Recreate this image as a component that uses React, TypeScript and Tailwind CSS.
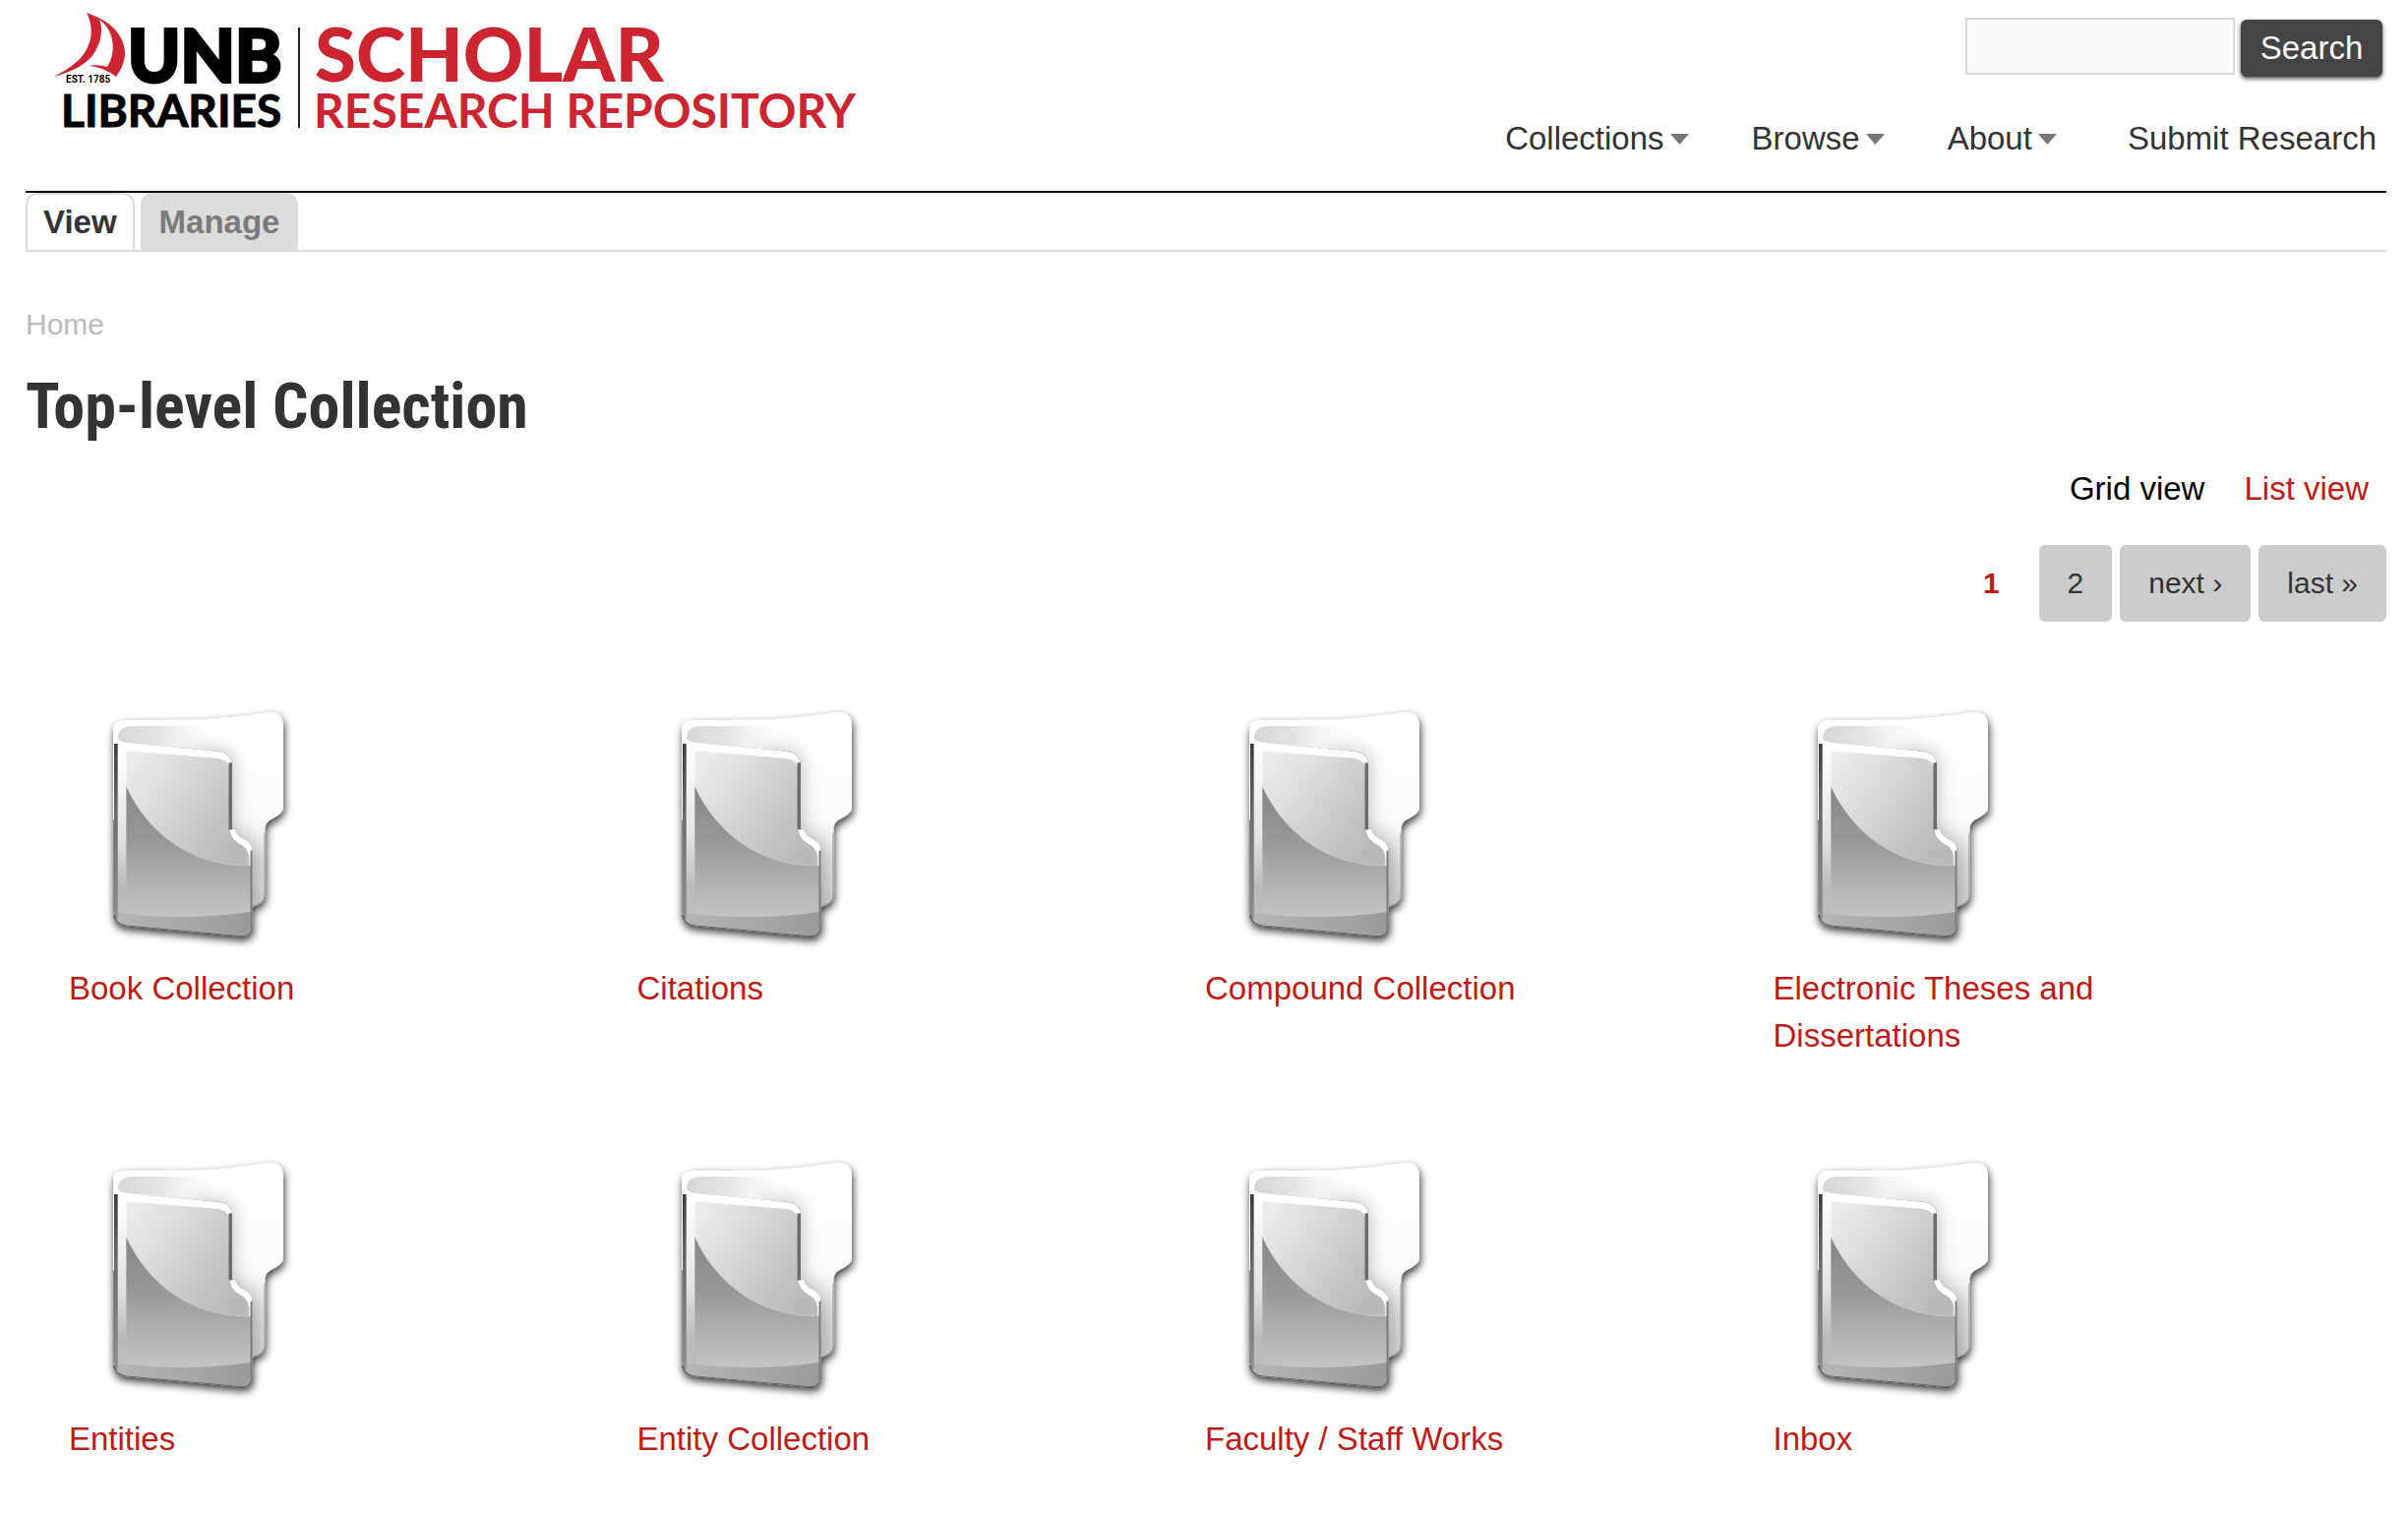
const navItems = [
  { label: "Collections", menu: true },
  { label: "Browse", menu: true },
  { label: "About", menu: true },
  { label: "Submit Research", menu: false },
];

const collections = [
  "Book Collection",
  "Citations",
  "Compound Collection",
  "Electronic Theses and Dissertations",
  "Entities",
  "Entity Collection",
  "Faculty / Staff Works",
  "Inbox",
];

const pages = ["2", "next ›", "last »"];

function Logo() {
  return (
    <svg
      className="block"
      width="828"
      height="140"
      viewBox="50 0 828 140"
      role="img"
      aria-label="UNB Libraries Scholar Research Repository"
      fontFamily="Lato, sans-serif"
    >
      <g fill="#cc2430">
        <path d="M88 13C93 22 94 34 91 43C86 60 71 69 55 78C72 73 89 66 97 52C103 41 105 29 101 20Q95 16 88 13Z" />
        <path d="M88 13C110 20 126 34 127 53C127 63 123 71 118 78Q105 68 90 67Q100 65 109 68C119 53 116 30 101 20Z" />
      </g>
      <text x="67" y="84" fontSize="10" fontWeight="700" fontFamily="Roboto, sans-serif">EST. 1785</text>
      <text x="130" y="83" fontSize="72" fontWeight="700" stroke="#000" strokeWidth="4">UNB</text>
      <text x="62" y="129" fontSize="46" fontWeight="700" stroke="#000" strokeWidth="1">LIBRARIES</text>
      <rect x="303" y="28" width="2" height="102" fill="#222" />
      <g fill="#cc2430">
        <text x="320" y="83" fontSize="76" fontWeight="900">SCHOLAR</text>
        <text x="319" y="130" fontSize="48" fontWeight="700">RESEARCH REPOSITORY</text>
      </g>
    </svg>
  );
}

function FolderDefs() {
  return (
    <svg width="0" height="0" className="absolute" aria-hidden="true">
      <defs>
        <filter id="folderShadow" filterUnits="userSpaceOnUse" x="0" y="0" width="840" height="900">
          <feGaussianBlur in="SourceAlpha" stdDeviation="13" result="b" />
          <feOffset in="b" dx="2" dy="12" result="o" />
          <feComponentTransfer in="o" result="s">
            <feFuncA type="linear" slope="0.8" />
          </feComponentTransfer>
          <feMerge>
            <feMergeNode in="s" />
            <feMergeNode in="SourceGraphic" />
          </feMerge>
        </filter>
        <filter id="folderSoft" filterUnits="userSpaceOnUse" x="0" y="0" width="840" height="900">
          <feGaussianBlur stdDeviation="30" />
        </filter>
        <filter id="folderEdge" filterUnits="userSpaceOnUse" x="0" y="0" width="840" height="900">
          <feGaussianBlur stdDeviation="2" />
        </filter>
        <linearGradient id="folderBack" x1="0" y1="0" x2="0" y2="1">
          <stop offset="0" stopColor="#fff" />
          <stop offset="0.55" stopColor="#fafafa" />
          <stop offset="1" stopColor="#d4d4d4" />
        </linearGradient>
        <linearGradient id="folderHollow" x1="0" y1="0" x2="1" y2="0">
          <stop offset="0" stopColor="#d6d6d6" />
          <stop offset="0.4" stopColor="#e6e6e6" />
          <stop offset="1" stopColor="#fff" stopOpacity="0" />
        </linearGradient>
        <linearGradient id="folderFace" x1="0.1" y1="0" x2="0.7" y2="0.65">
          <stop offset="0" stopColor="#ececec" />
          <stop offset="1" stopColor="#bababa" />
        </linearGradient>
        <linearGradient id="folderWave" x1="0" y1="0" x2="0" y2="1">
          <stop offset="0" stopColor="#858585" />
          <stop offset="0.45" stopColor="#9b9b9b" />
          <stop offset="0.95" stopColor="#c2c2c2" />
        </linearGradient>
        <linearGradient id="folderSpine" x1="0" y1="0" x2="0" y2="1">
          <stop offset="0" stopColor="#fff" />
          <stop offset="0.5" stopColor="#e4e4e4" />
          <stop offset="0.8" stopColor="#b9b9b9" />
          <stop offset="1" stopColor="#c0c0c0" />
        </linearGradient>
        <linearGradient id="folderDark" x1="0" y1="0" x2="0" y2="1">
          <stop offset="0" stopColor="#3c3c3c" />
          <stop offset="0.45" stopColor="#707070" />
          <stop offset="1" stopColor="#8e8e8e" />
        </linearGradient>
        <linearGradient id="folderBase" x1="0" y1="0" x2="1" y2="0">
          <stop offset="0" stopColor="#b6b6b6" />
          <stop offset="1" stopColor="#9a9a9a" />
        </linearGradient>
        <clipPath id="folderBackClip">
          <path d="M165 130Q165 100 195 97L420 95Q540 88 640 72Q684 70 684 115V365Q684 380 645 400Q628 410 628 430V630Q628 655 592 665L400 640H165Z" />
        </clipPath>
        <clipPath id="folderFrontClip">
          <path d="M165 150V690Q168 720 205 724L555 756Q590 756 590 725V490Q585 470 560 458Q530 442 528 425V230Q526 197 485 191L205 164Q180 160 165 150Z" />
        </clipPath>
      </defs>
    </svg>
  );
}

function FolderIcon() {
  return (
    <svg className="block" width="230" height="270" viewBox="30 0 690 810" aria-hidden="true">
      <g filter="url(#folderShadow)">
        <path
          d="M165 130Q165 100 195 97L420 95Q540 88 640 72Q684 70 684 115V365Q684 380 645 400Q628 410 628 430V630Q628 655 592 665L400 640H165Z"
          fill="url(#folderBack)"
        />
        <path
          d="M165 130V690Q168 720 205 724L555 756Q590 756 590 725V490Q585 470 560 458Q530 442 528 425V230Q526 197 485 191L205 164Z"
          fill="#8a8a8a"
        />
      </g>
      <g clipPath="url(#folderBackClip)">
        <path d="M400 180L520 205V430L600 490V690H400Z" fill="#8a8a8a" opacity="0.75" filter="url(#folderSoft)" />
        <path d="M150 80H230V180H165Z" fill="#fff" />
        <path d="M180 150Q180 116 225 114L460 114Q500 150 510 200L485 191L205 166Q180 164 180 150Z" fill="url(#folderHollow)" />
        <path d="M592 665Q628 655 628 630V440" fill="none" stroke="#8d8d8d" strokeWidth="5" filter="url(#folderEdge)" />
      </g>
      <g clipPath="url(#folderFrontClip)">
        <path d="M165 150L205 164L485 191Q526 197 528 230V425Q530 442 560 458Q585 470 590 490V600H205V400H165Z" fill="#fff" />
        <path d="M205 190L480 212Q514 215 520 240V425Q522 455 548 472Q575 484 580 512V760H205Z" fill="url(#folderFace)" />
        <rect x="178" y="180" width="27" height="540" fill="url(#folderSpine)" />
        <path d="M205 298C270 440 400 540 576 540H590V690Q400 712 205 690Z" fill="url(#folderWave)" />
        <path d="M165 682Q380 712 592 680V770H165Z" fill="url(#folderBase)" />
        <path d="M205 298C270 440 400 540 576 540V512" fill="none" stroke="#d0d0d0" strokeWidth="3" opacity="0.6" />
        <rect x="168" y="168" width="11" height="535" fill="url(#folderDark)" filter="url(#folderEdge)" />
        <path d="M523 226V430" stroke="#6c6c6c" strokeWidth="11" filter="url(#folderEdge)" />
        <path d="M587 494V730" stroke="#7c7c7c" strokeWidth="7" filter="url(#folderEdge)" />
        <path d="M166 690Q170 722 205 725L555 757Q591 757 591 725" fill="none" stroke="#5c5c5c" strokeWidth="7" filter="url(#folderEdge)" />
      </g>
      <path d="M533 434Q538 451 560 463Q578 471 584 488" fill="none" stroke="#fff" strokeWidth="10" strokeLinecap="round" />
    </svg>
  );
}

export default function App() {
  return (
    <div className="min-h-screen bg-[#fefefe] pb-10 pl-[26px] pr-[22px] font-['Liberation_Sans',Arial,sans-serif] text-[33px] leading-[48px] text-[#333]">
      <FolderDefs />
      <header className="flex h-[196px] items-start justify-between border-b-2 border-black pl-6">
        <a href="#" className="shrink-0">
          <Logo />
        </a>
        <div className="flex flex-col items-end">
          <form className="mr-1 flex items-start gap-1.5 pt-[18px]" onSubmit={(e) => e.preventDefault()}>
            <input
              type="text"
              aria-label="Search"
              className="h-[58px] w-[274px] border-2 border-[#d9d9d9] bg-[#fafafa] px-3 outline-none"
            />
            <button
              type="submit"
              className="mt-0.5 h-[58px] w-36 rounded-md bg-[#444] text-white shadow-[0_2px_4px_rgba(0,0,0,0.7)]"
            >
              Search
            </button>
          </form>
          <nav className="mr-2.5 mt-[39px] flex gap-16">
            {navItems.map((item) => (
              <a key={item.label} href="#" className="flex items-center gap-1.5 whitespace-nowrap last:ml-2">
                {item.label}
                {item.menu && (
                  <svg width="19" height="11" viewBox="0 0 19 11" aria-hidden="true">
                    <path d="M0 0H19L9.500 11Z" fill="#777" />
                  </svg>
                )}
              </a>
            ))}
          </nav>
        </div>
      </header>

      <ul className="flex gap-1.5 border-b-2 border-[#dcdcdc] font-bold">
        <li className="flex h-[58px] items-center rounded-t-xl border-2 border-b-0 border-[#dcdcdc] px-4">
          <a href="#">View</a>
        </li>
        <li className="flex h-[58px] items-center rounded-t-xl bg-[#dcdcdc] px-[19px] pt-0.5 text-[#7b7b7b]">
          <a href="#">Manage</a>
        </li>
      </ul>

      <main>
        <nav aria-label="Breadcrumb" className="mt-[50px] text-[30px] text-[#bbb]">
          <a href="#">Home</a>
        </nav>
        <h1 className="mt-3 font-['Roboto_Condensed',Roboto,sans-serif] text-[64px] font-bold leading-[96px]">
          Top-level Collection
        </h1>
        <div className="mr-[18px] mt-[11px] flex justify-end gap-10">
          <a href="#" className="text-black">
            Grid view
          </a>
          <a href="#" className="text-[#be1b14]">
            List view
          </a>
        </div>
        <nav aria-label="Pages" className="mt-[33px] flex items-center justify-end gap-2 text-[30px]">
          <span className="mr-8 font-bold text-[#be1b14]">1</span>
          {pages.map((page) => (
            <a key={page} href="#" className="flex h-[78px] items-center rounded-md bg-[#ccc] px-[29px]">
              {page}
            </a>
          ))}
        </nav>
        <ul className="ml-11 mr-[46px] mt-[68px] grid grid-cols-4 gap-y-[81px]">
          {collections.map((name) => (
            <li key={name}>
              <a href="#" className="block w-3/4 text-[#be1b14]">
                <FolderIcon />
                <span className="mt-[11px] block">{name}</span>
              </a>
            </li>
          ))}
        </ul>
      </main>
    </div>
  );
}
